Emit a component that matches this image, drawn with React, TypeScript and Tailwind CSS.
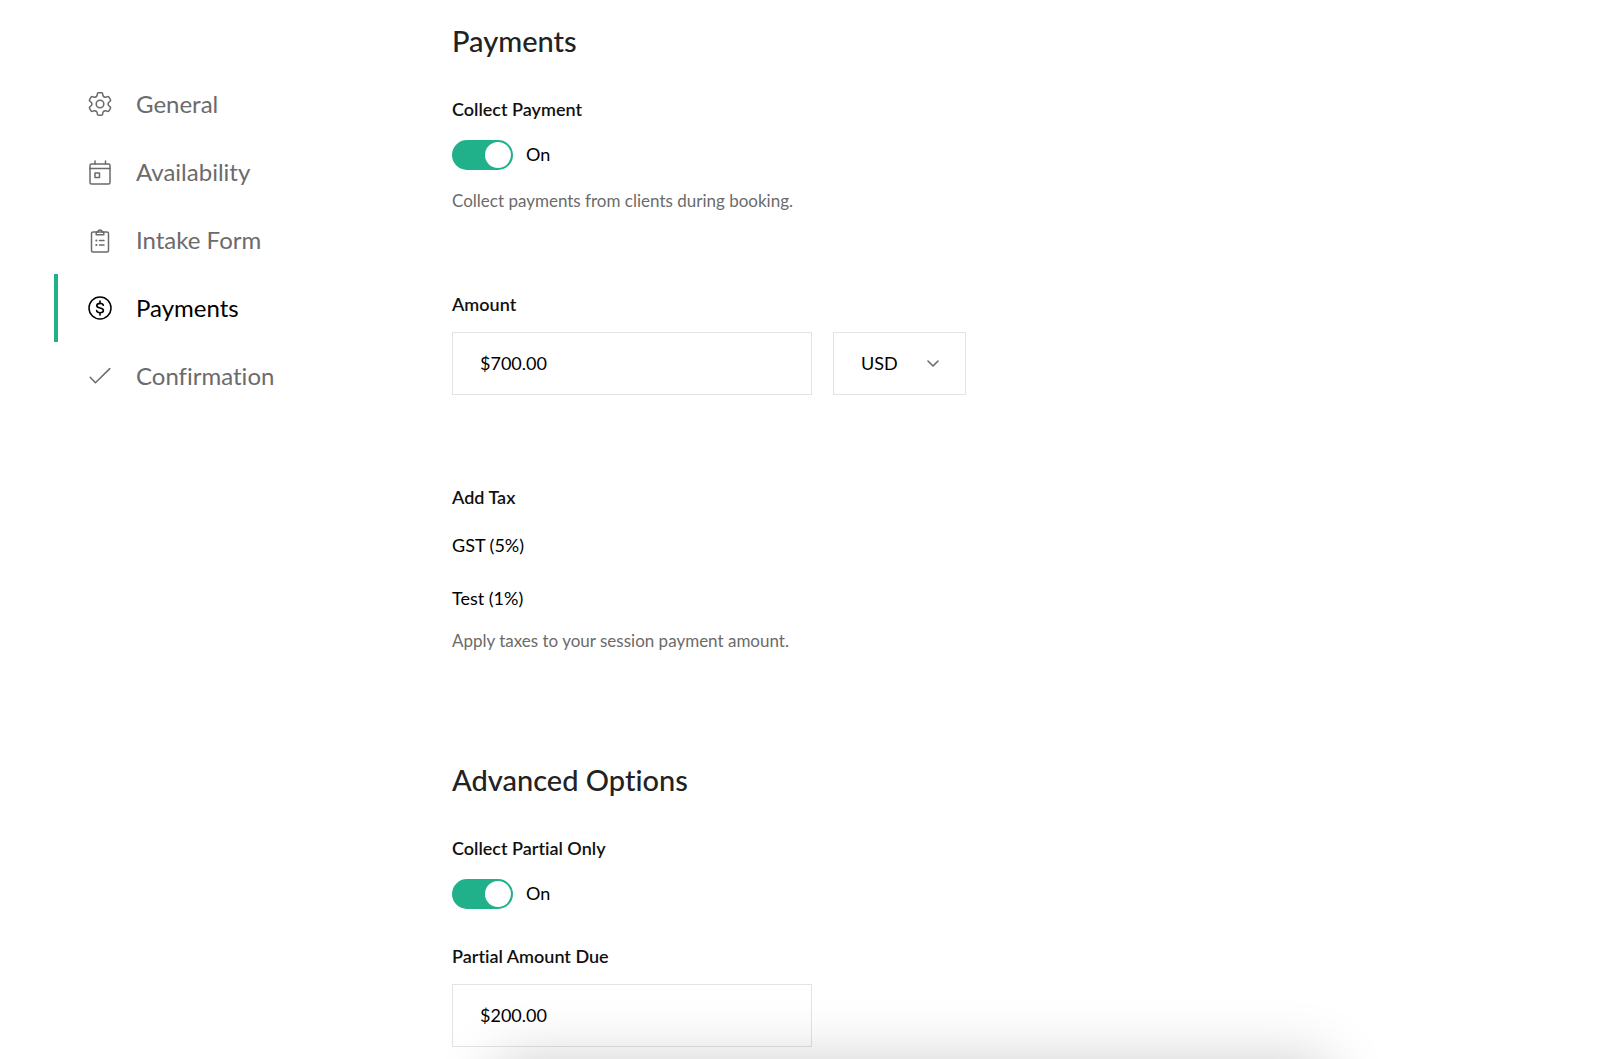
import { useState, type ReactNode } from "react";

const strokeProps = {
  fill: "none",
  stroke: "currentColor",
  strokeWidth: 1.5,
  strokeLinecap: "round" as const,
  strokeLinejoin: "round" as const,
  "aria-hidden": true,
};

const TOOTH =
  "M-4.1-7.1C-3.4-7.5-3.1-7.8-2.9-8.5L-2.6-10.3Q-2.4-11.2-1.5-11.2H1.5Q2.4-11.2 2.6-10.3L2.9-8.5C3.1-7.8 3.4-7.5 4.1-7.1";

function GearIcon() {
  return (
    <svg viewBox="-14 -14 28 28" className="size-7" {...strokeProps}>
      <circle r="3.8" />
      {[0, 60, 120, 180, 240, 300].map((angle) => (
        <path key={angle} d={TOOTH} transform={`rotate(${angle})`} />
      ))}
    </svg>
  );
}

function CalendarIcon() {
  return (
    <svg viewBox="0 0 28 28" className="size-7" {...strokeProps}>
      <rect x="4" y="6" width="20" height="20" rx="1.5" />
      <path d="M4 10.5h20M9 3v3M19.5 3v3" />
      <rect x="9" y="15" width="4.5" height="4.5" />
    </svg>
  );
}

function ClipboardIcon() {
  return (
    <svg viewBox="0 0 28 28" className="size-7" {...strokeProps}>
      <rect x="5.5" y="6" width="17" height="20" rx="1.5" />
      <path d="M10.2 8.8V7c0-.6.4-1 1-1h.8a2 2 0 1 1 4 0h.8c.6 0 1 .4 1 1v1.8z" />
      <path d="M13.5 14.5h4.5M13.5 19h4.5" />
      <path d="M10.2 14.5h.3M10.2 19h.3" strokeWidth="1.8" />
    </svg>
  );
}

function DollarIcon() {
  return (
    <svg viewBox="0 0 28 28" className="size-7" {...strokeProps}>
      <circle cx="14" cy="14" r="11" />
      <path
        d="M17.3 11.3c-.3-1.2-1.5-1.9-3.2-1.9-1.9 0-3.3.9-3.3 2.3 0 3.2 6.6 1.4 6.6 4.6 0 1.5-1.4 2.4-3.3 2.4-1.9 0-3.2-.8-3.5-2.1M14 7v2.2M14 18.9v2.2"
        strokeWidth={1.6}
      />
    </svg>
  );
}

function CheckIcon() {
  return (
    <svg viewBox="0 0 28 28" className="size-7" {...strokeProps}>
      <path d="M4.2 15.3 9.4 20.8 23.8 6.6" />
    </svg>
  );
}

const navItems: { label: string; icon: ReactNode; active?: boolean }[] = [
  { label: "General", icon: <GearIcon /> },
  { label: "Availability", icon: <CalendarIcon /> },
  { label: "Intake Form", icon: <ClipboardIcon /> },
  { label: "Payments", icon: <DollarIcon />, active: true },
  { label: "Confirmation", icon: <CheckIcon /> },
];

function SideNav() {
  return (
    <nav aria-label="Settings" className="w-[398px] shrink-0 pt-[47px]">
      <ul>
        {navItems.map((item) => (
          <li key={item.label}>
            <a
              href={"#" + item.label.toLowerCase().replace(" ", "-")}
              aria-current={item.active ? "page" : undefined}
              className={
                item.active
                  ? "flex h-[68px] items-center gap-[22px] border-l-4 border-[#20b08a] pl-7 text-2xl text-black"
                  : "flex h-[68px] items-center gap-[22px] border-l-4 border-transparent pl-7 text-2xl text-[#6b6b6b]"
              }
            >
              {item.icon}
              {item.label}
            </a>
          </li>
        ))}
      </ul>
    </nav>
  );
}

function Toggle({ id, label }: { id: string; label: string }) {
  const [on, setOn] = useState(true);
  return (
    <div>
      <label htmlFor={id} className="block text-lg/6 font-semibold text-[#111]">
        {label}
      </label>
      <div className="mt-[19px] flex items-center gap-[13px]">
        <input
          id={id}
          type="checkbox"
          role="switch"
          checked={on}
          onChange={(e) => setOn(e.target.checked)}
          className="flex h-[30px] w-[61px] cursor-pointer appearance-none items-center rounded-full bg-gray-300 p-0.5 before:size-[26px] before:rounded-full before:bg-white checked:justify-end checked:bg-[#20b08a]"
        />
        <span className="pb-0.5 text-lg/6">{on ? "On" : "Off"}</span>
      </div>
    </div>
  );
}

function AmountInput({ id, value }: { id: string; value: string }) {
  return (
    <input
      id={id}
      type="text"
      defaultValue={value}
      className="h-[63px] w-[360px] border border-[#e3e3e3] bg-white px-[27px] pb-0.5 text-lg/6 outline-none"
    />
  );
}

export default function App() {
  return (
    <div className="flex h-screen overflow-hidden bg-white pt-[23px] pl-[54px] font-[Lato,sans-serif] text-black [font-variant-ligatures:none]">
      <SideNav />
      <main className="min-w-0 flex-1">
        <section>
          <h2 className="text-[29px]/9 font-medium text-[#222]">Payments</h2>
          <div className="mt-[38px]">
            <Toggle id="collect-payment" label="Collect Payment" />
          </div>
          <p className="mt-[19px] text-[17px]/6 text-[#6b6b6b]">Collect payments from clients during booking.</p>

          <label htmlFor="amount" className="mt-[79px] block text-lg/6 font-semibold text-[#111]">
            Amount
          </label>
          <div className="mt-4 flex gap-[21px]">
            <AmountInput id="amount" value="$700.00" />
            <div className="relative">
              <select
                aria-label="Currency"
                defaultValue="USD"
                className="h-[63px] w-[133px] appearance-none border border-[#e3e3e3] bg-white px-[27px] pb-0.5 text-lg/6 outline-none"
              >
                <option>USD</option>
                <option>CAD</option>
                <option>EUR</option>
              </select>
              <svg
                viewBox="0 0 12 8"
                className="pointer-events-none absolute top-7 right-[27px] h-2 w-3"
                {...strokeProps}
                stroke="#6b6b6b"
                strokeWidth={1.6}
              >
                <path d="M1 1 6 6 11 1" />
              </svg>
            </div>
          </div>

          <h3 className="mt-[90px] text-lg/6 font-semibold text-[#111]">Add Tax</h3>
          <ul className="mt-6 flex flex-col gap-[29px] text-lg/6">
            <li>GST (5%)</li>
            <li>Test (1%)</li>
          </ul>
          <p className="mt-[19px] text-[17px]/6 text-[#6b6b6b]">Apply taxes to your session payment amount.</p>
        </section>

        <section className="mt-[109px]">
          <h2 className="text-[29px]/9 font-medium text-[#222]">Advanced Options</h2>
          <div className="mt-[38px]">
            <Toggle id="collect-partial" label="Collect Partial Only" />
          </div>
          <label htmlFor="partial" className="mt-[35px] mb-4 block text-lg/6 font-semibold text-[#111]">
            Partial Amount Due
          </label>
          <AmountInput id="partial" value="$200.00" />
        </section>
      </main>
      <div
        aria-hidden
        className="pointer-events-none fixed top-full right-[17%] left-[31%] h-40 shadow-[0_0_60px_rgba(0,0,0,0.19)]"
      />
    </div>
  );
}
